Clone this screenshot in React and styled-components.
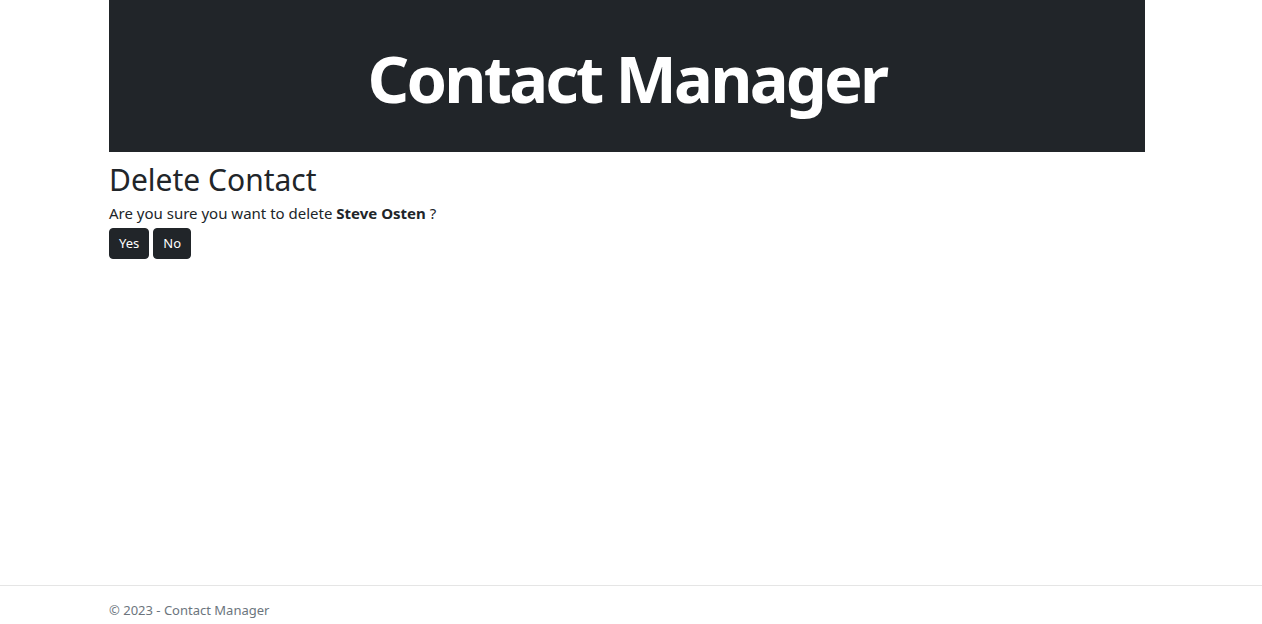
import React from "react";
import styled, { createGlobalStyle } from "styled-components";

const Global = createGlobalStyle`
  html, body { margin: 0; padding: 0; }
  body {
    font-family: "Noto Sans", "Open Sans", sans-serif;
    font-size: 16px;
    line-height: 1.5;
    color: #212529;
    background: #fff;
  }
`;

const Page = styled.div`
  min-height: 100vh;
  display: flex;
  flex-direction: column;
`;

const Container = styled.div`
  width: 1036px;
  margin-left: 109px;
`;

const Header = styled.header`
  background: #212529;
  height: 152px;
  display: flex;
  align-items: center;
  justify-content: center;
`;

const Title = styled.h1`
  margin: 0;
  padding-top: 4px;
  color: #fff;
  font-size: 65px;
  font-weight: 700;
  line-height: 1;
  letter-spacing: -2.8px;
`;

const Heading = styled.h2`
  margin: 10px 0 0;
  font-size: 30px;
  font-weight: 400;
  line-height: 1.2;
`;

const Text = styled.p`
  margin: 4px 0 3px;
  font-size: 15px;
`;

const Actions = styled.div`
  display: flex;
  gap: 4px;
`;

const Button = styled.button`
  font-family: inherit;
  background: #212529;
  color: #fff;
  border: 1px solid #212529;
  border-radius: 4px;
  font-size: 13px;
  line-height: 1.5;
  padding: 5px 9px;
  height: 31px;
  cursor: pointer;
`;

const Footer = styled.footer`
  margin-top: auto;
  border-top: 1px solid #e5e5e5;
  height: 38px;
  display: flex;
  align-items: center;
  font-size: 13px;
  color: #6c757d;
`;

const FooterInner = styled.div`
  margin-left: 109px;
  padding-top: 12px;
`;

export default function App() {
  return (
    <Page>
      <Global />
      <Container>
        <Header>
          <Title>Contact Manager</Title>
        </Header>
        <Heading>Delete Contact</Heading>
        <Text>
          Are you sure you want to delete <b>Steve Osten</b> ?
        </Text>
        <Actions>
          <Button>Yes</Button>
          <Button>No</Button>
        </Actions>
      </Container>
      <Footer>
        <FooterInner>© 2023 - Contact Manager</FooterInner>
      </Footer>
    </Page>
  );
}
